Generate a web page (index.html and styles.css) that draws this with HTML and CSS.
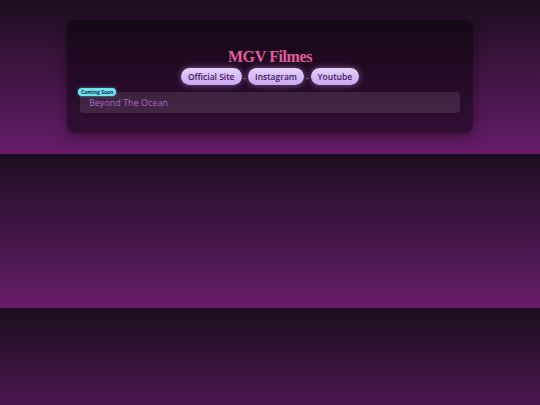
FILE: index.html
```html
<!DOCTYPE html>
<html>
<head>
<meta charset="utf-8">
<link rel="stylesheet" href="styles.css">
</head>
<body>
<main class="card">
  <h1 class="title">MGV Filmes</h1>
  <nav class="links">
    <a class="pill">Official Site</a>
    <span class="sep">-</span>
    <a class="pill">Instagram</a>
    <span class="sep">-</span>
    <a class="pill">Youtube</a>
  </nav>
  <ul class="list">
    <li class="item">
      <span class="badge">Coming Soon</span>
      <span class="item-name">Beyond The Ocean</span>
    </li>
  </ul>
</main>
</body>
</html>
```
FILE: styles.css
```css
html {
  background: linear-gradient(to bottom, #1c0d1f, #661c6a);
}
body {
  margin: 0;
  padding: 20px 0 21px;
  font-family: "Open Sans", "DejaVu Sans", sans-serif;
}
.card {
  width: 406px;
  margin: 0 auto;
  box-sizing: border-box;
  padding: 25px 13px 20px;
  background: rgba(0, 0, 0, 0.45);
  border-radius: 8px;
  box-shadow: 0 4px 14px rgba(0, 0, 0, 0.35);
}
.title {
  margin: 0;
  text-align: center;
  font-family: "Liberation Serif", "DejaVu Serif", serif;
  font-weight: bold;
  font-size: 16px;
  line-height: 23px;
  letter-spacing: -0.4px;
  color: #e35d9c;
}
.links {
  display: flex;
  justify-content: center;
  align-items: center;
  gap: 1px;
  height: 17px;
}
.pill {
  display: inline-flex;
  align-items: center;
  height: 17px;
  padding: 0 7px;
  border-radius: 9px;
  background: linear-gradient(to bottom, #e6d2fb, #c8a6f1);
  color: #3f1a5a;
  font-size: 8.5px;
  font-weight: 600;
  box-shadow: 0 0 6px rgba(200, 150, 240, 0.55);
}
.sep {
  color: #c9b4da;
  font-size: 8px;
  padding: 0 1px;
}
.list {
  list-style: none;
  margin: 7px 0 0;
  padding: 0;
}
.item {
  position: relative;
  height: 21px;
  display: flex;
  align-items: center;
  padding-left: 9px;
  border-radius: 4px;
  background: rgba(255, 255, 255, 0.1);
}
.item-name {
  color: #a866c9;
  font-size: 9px;
}
.badge {
  position: absolute;
  left: -2px;
  top: -4px;
  height: 8px;
  padding: 0 3px;
  display: flex;
  align-items: center;
  border-radius: 4px;
  background: #73e2f3;
  color: #143040;
  font-size: 5px;
  font-weight: 700;
  box-shadow: 0 0 3px rgba(115, 226, 243, 0.6);
}
```
